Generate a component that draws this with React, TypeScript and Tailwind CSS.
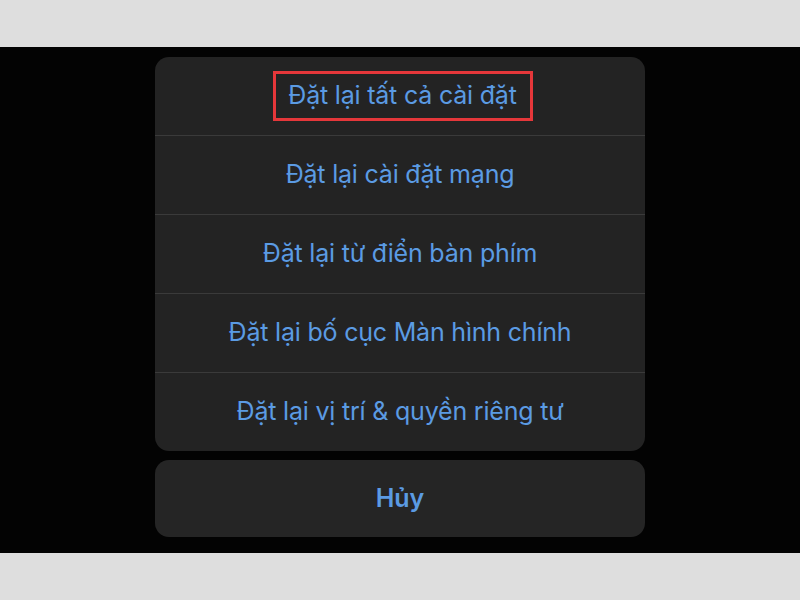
const items = [
  'Đặt lại tất cả cài đặt',
  'Đặt lại cài đặt mạng',
  'Đặt lại từ điển bàn phím',
  'Đặt lại bố cục Màn hình chính',
  'Đặt lại vị trí & quyền riêng tư',
];

export default function App() {
  return (
    <div className="flex h-[600px] w-[800px] flex-col bg-[#dedede] font-['Inter',sans-serif]">
      <div className="h-[47px]" />
      <div className="flex h-[506px] flex-col items-center bg-[#030303] pt-[10px]">
        <div className="w-[490px] overflow-hidden rounded-[14px] bg-[#232323]">
          {items.map((label, i) => (
            <div
              key={label}
              className={`flex items-center justify-center ${i > 0 ? 'h-[79px] border-t border-[#3a3a3a]' : 'h-[78px]'}`}
            >
              {i === 0 ? (
                <span className="ml-[5px] flex h-[50px] w-[260px] items-center justify-center border-[3px] border-[#e5373a] text-[25px] tracking-[-0.2px] text-[#5b9be3]">
                  {label}
                </span>
              ) : (
                <span className="text-[25px] tracking-[-0.2px] text-[#5b9be3]">{label}</span>
              )}
            </div>
          ))}
        </div>
        <div className="mt-[9px] flex h-[77px] w-[490px] items-center justify-center rounded-[14px] bg-[#252525]">
          <span className="text-[25px] font-semibold text-[#5b9be3]">Hủy</span>
        </div>
      </div>
    </div>
  );
}
